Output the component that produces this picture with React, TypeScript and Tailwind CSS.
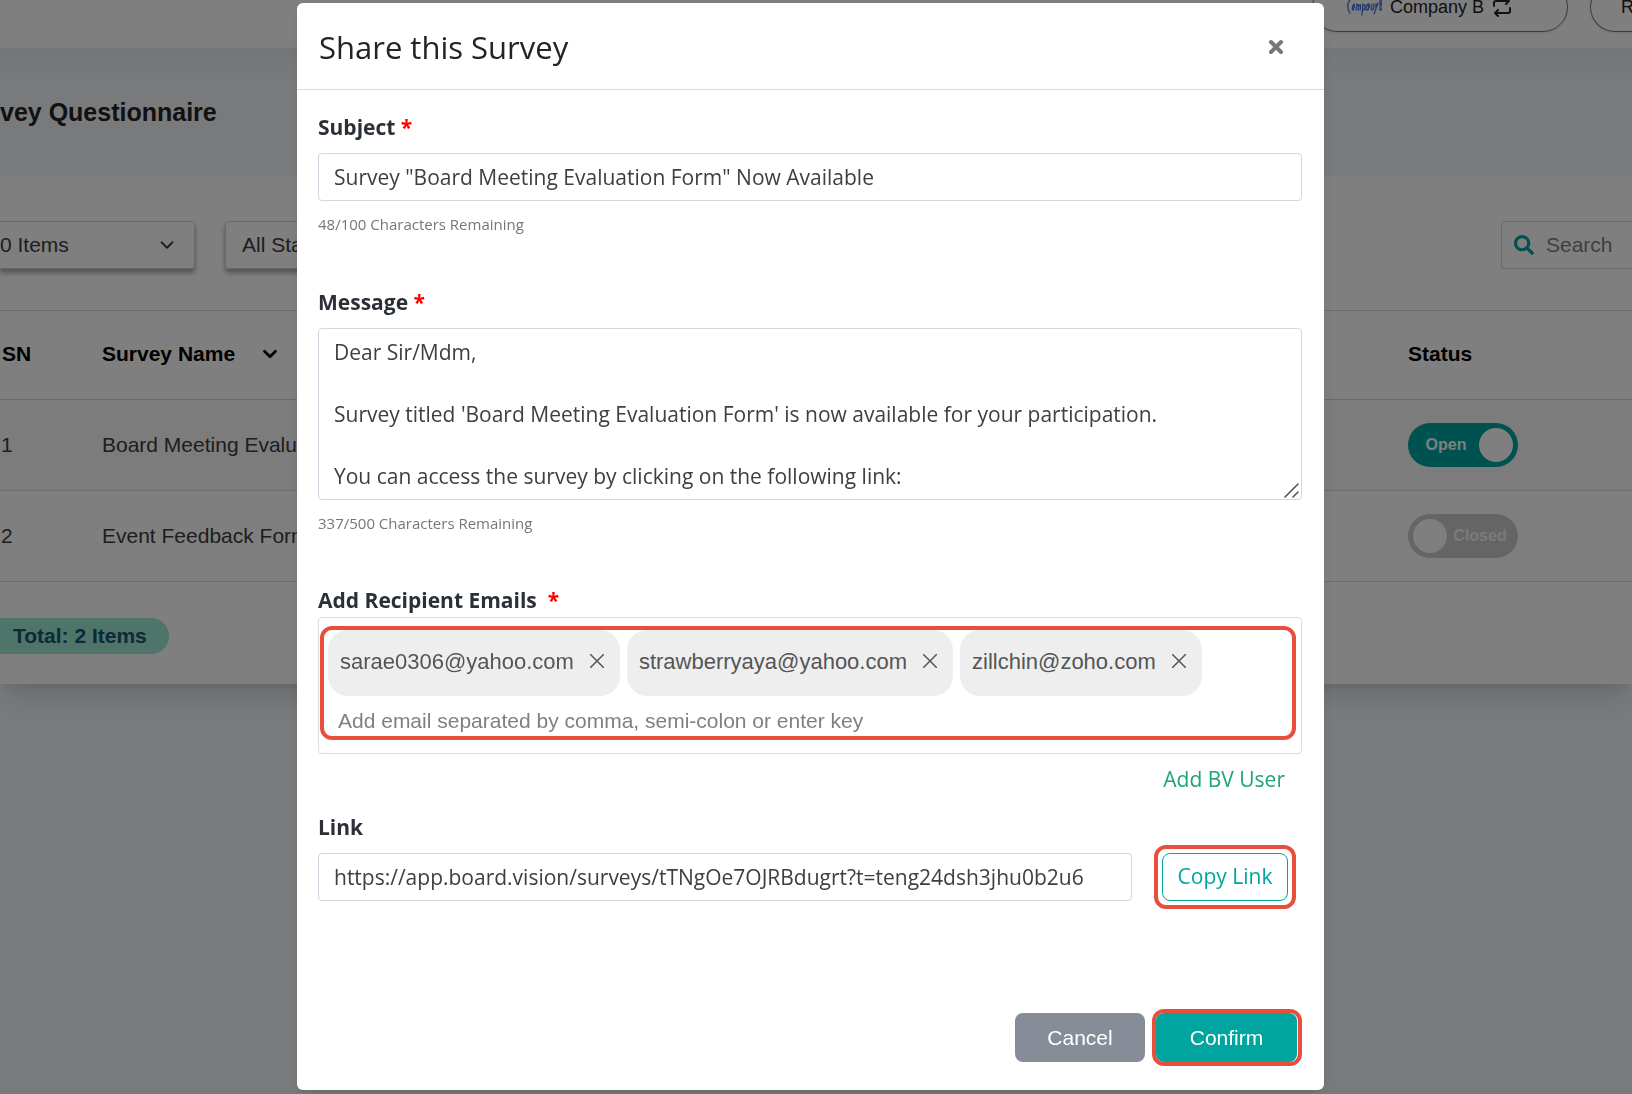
import { useState } from 'react'
import { ChevronDown } from 'lucide-react'
import { FaSearch } from 'react-icons/fa'

const recipients = ['sarae0306@yahoo.com', 'strawberryaya@yahoo.com', 'zillchin@zoho.com']

const surveys = [
  { sn: 1, name: 'Board Meeting Evaluation Form', open: true },
  { sn: 2, name: 'Event Feedback Form', open: false },
]

const defaultMessage = `Dear Sir/Mdm,

Survey titled 'Board Meeting Evaluation Form' is now available for your participation.

You can access the survey by clicking on the following link:`

const CompanyLogo = () => (
  <svg className="h-[18px] w-9" viewBox="0 0 36 18" fill="none" stroke="#4a74d8" strokeWidth="1.3" strokeLinecap="round">
    <path d="M4 2C1 5 1 12 4 15" />
    <path d="M8 6c-2 2-2 7-1 6s2-5 1-6M10 12l1-6M11 8c2-3 2 0 1 4M13 8c2-3 2 0 1 4M17 6l-1 11M17 7c3-2 3 5 0 5" />
    <path d="M23 6c-3 0-4 6-2 6s3-6 2-6l-1 6M26 6c-1 3-1 6 0 6s2-3 2-6M30 6v5M32 5l-4 11M34 2v10M34 2c3 0 2 4 0 4c3 0 3 6 0 6" />
  </svg>
)

const SwapIcon = () => (
  <svg
    className="size-5"
    viewBox="0 0 20 20"
    fill="none"
    stroke="currentColor"
    strokeWidth="2"
    strokeLinecap="round"
    strokeLinejoin="round"
  >
    <path d="M2 9V6a2 2 0 0 1 2-2h13M14 1l3 3-3 3" />
    <path d="M18 11v3a2 2 0 0 1-2 2H3M6 13l-3 3 3 3" />
  </svg>
)

const StatusToggle = ({ name, defaultOpen }: { name: string; defaultOpen: boolean }) => {
  const [open, setOpen] = useState(defaultOpen)
  return (
    <label
      className={`flex h-11 w-[110px] items-center rounded-full px-[5px] text-base font-bold ${
        open ? 'flex-row-reverse bg-[#00a5a0] text-white' : 'bg-[#cbcbcb] text-[#f4f4f4]'
      }`}
    >
      <input
        type="checkbox"
        className="sr-only"
        aria-label={`${name} status`}
        checked={open}
        onChange={(e) => setOpen(e.target.checked)}
      />
      <span className="size-[34px] shrink-0 rounded-full bg-white" />
      <span className="flex-1 text-center">{open ? 'Open' : 'Closed'}</span>
    </label>
  )
}

const SurveyPage = () => (
  <div className="min-h-screen overflow-hidden bg-[#f3f5f9] font-['Liberation_Sans',Arial,sans-serif] text-[21px] text-[#3c3c3c]">
    {/* Top bar */}
    <header className="flex h-12 items-end gap-[22px] bg-white pb-4 text-lg text-[#222]">
      <div className="flex-1" />
      <button className="flex h-[50px] w-[256px] shrink-0 items-center gap-2 rounded-full border border-[#777] pl-[33px] shadow">
        <CompanyLogo />
        Company B
        <SwapIcon />
      </button>
      <button className="h-[50px] w-[42px] shrink-0 rounded-l-full border border-r-0 border-[#777] pl-[30px] text-left shadow">
        R
      </button>
    </header>

    {/* Page heading */}
    <div className="flex h-32 items-center bg-linear-to-b from-[#eaecef] to-[#f3f5f9] to-30% pt-[2px]">
      <h1 className="text-[25px] font-bold text-[#222]">vey Questionnaire</h1>
    </div>

    <main className="bg-white shadow-xl">
      <div className="flex h-[134px] items-center pt-1">
        <button className="flex h-12 w-[195px] items-center justify-between rounded-r border border-l-0 border-[#ced0da] pr-4 shadow-[0_4px_5px_rgba(0,0,0,0.35)]">
          0 Items
          <ChevronDown className="size-[22px]" />
        </button>
        <button className="ml-[30px] flex h-12 w-[195px] items-center justify-between rounded border border-[#ced0da] px-4 shadow-[0_4px_5px_rgba(0,0,0,0.35)]">
          All Status
          <ChevronDown className="size-[22px]" />
        </button>
        <div className="ml-auto flex h-12 w-[131px] items-center gap-3 rounded-l border border-r-0 border-[#ced0da] pl-3">
          <FaSearch className="size-5 shrink-0 text-[#00a5a0]" />
          <input className="w-full outline-none placeholder:text-[#808080]" placeholder="Search" aria-label="Search" />
        </div>
      </div>

      <table className="w-full table-fixed border-t border-[#d8dbe0] text-left">
        <thead>
          <tr className="h-[89px] border-b border-[#d0d2d6] text-black">
            <th className="w-[102px] pb-[2px] pl-[2px]">SN</th>
            <th className="pb-[2px]">
              <span className="flex items-center gap-6">
                Survey Name
                <ChevronDown className="size-[22px]" strokeWidth={3} />
              </span>
            </th>
            <th className="w-[224px] pb-[2px]">Status</th>
          </tr>
        </thead>
        <tbody>
          {surveys.map((survey) => (
            <tr key={survey.sn} className="h-[91px] border-b border-[#d8dbe0] odd:bg-[#f9f9f9]">
              <td className="pl-[1px]">{survey.sn}</td>
              <td>{survey.name}</td>
              <td>
                <StatusToggle name={survey.name} defaultOpen={survey.open} />
              </td>
            </tr>
          ))}
        </tbody>
      </table>

      <div className="flex h-[102px] items-start pt-9">
        <span className="flex h-9 items-center rounded-r-full bg-[#9ee8d4] pr-[22px] pl-[13px] font-bold text-[#1d5470]">
          Total: 2 Items
        </span>
      </div>
    </main>
  </div>
)

const Required = () => <span className="text-[#f00]">*</span>

const ShareDialog = () => (
  <div
    role="dialog"
    aria-labelledby="share-title"
    className="mt-[3px] mr-[308px] ml-[297px] flex flex-1 flex-col rounded-md bg-white text-[#3c4043] shadow-lg"
  >
    <header className="flex h-[87px] items-center justify-between border-b border-[#d8dbe0] pt-[2px] pr-10 pl-[22px]">
      <h2 id="share-title" className="text-[31px] text-[#212529]">
        Share this Survey
      </h2>
      <button aria-label="Close" className="text-[#777]">
        <svg className="size-4" viewBox="0 0 16 16" stroke="currentColor" strokeWidth="4" strokeLinecap="round">
          <path d="M3 3l10 10M13 3L3 13" />
        </svg>
      </button>
    </header>

    <form className="flex flex-1 flex-col pt-[19px] pr-[22px] pl-[21px]" onSubmit={(e) => e.preventDefault()}>
      <label htmlFor="subject" className="mb-2 h-9 leading-9 font-bold text-[#2b2f36]">
        Subject <Required />
      </label>
      <input
        id="subject"
        className="h-12 rounded border border-[#d3d6e0] px-[15px]"
        defaultValue={'Survey "Board Meeting Evaluation Form" Now Available'}
      />
      <small className="mt-[11px] h-6 text-[15px] leading-6 text-[#777]">48/100 Characters Remaining</small>

      <label htmlFor="message" className="mt-12 mb-2 h-9 leading-9 font-bold text-[#2b2f36]">
        Message <Required />
      </label>
      <div className="relative flex">
        <textarea
          id="message"
          className="h-[172px] w-full resize-none overflow-hidden rounded border border-[#d3d6e0] px-[15px] pt-2 leading-[31px]"
          defaultValue={defaultMessage}
        />
        {/* Resize grip */}
        <svg
          className="absolute right-[3px] bottom-[2px] size-[15px]"
          viewBox="0 0 15 15"
          stroke="#555"
          strokeWidth="1.6"
          strokeLinecap="round"
        >
          <path d="M1 14L14 1M9 14l5-5" />
        </svg>
      </div>
      <small className="mt-[11px] h-6 text-[15px] leading-6 text-[#777]">337/500 Characters Remaining</small>

      <label htmlFor="recipients" className="mt-12 h-[34px] leading-[34px] font-bold text-[#2b2f36]">
        Add Recipient Emails&nbsp; <Required />
      </label>
      <div className="rounded border border-[#dcdcdc] pt-2 pr-[5px] pb-[13px] pl-[1px] font-['Liberation_Sans',Arial,sans-serif]">
        <div className="h-[114px] rounded-xl border-4 border-[#e74f3c] pl-1">
          <ul className="flex gap-[7px] text-[22px] text-[#555]">
            {recipients.map((email) => (
              <li key={email} className="flex h-[66px] items-center gap-4 rounded-[20px] bg-[#eee] pr-4 pb-1 pl-3">
                {email}
                <button type="button" aria-label={`Remove ${email}`}>
                  <svg className="size-[14px]" viewBox="0 0 14 14" stroke="currentColor" strokeWidth="1.5">
                    <path d="M0 0l14 14M14 0L0 14" />
                  </svg>
                </button>
              </li>
            ))}
          </ul>
          <input
            id="recipients"
            className="mt-[10px] h-[30px] w-full px-[10px] outline-none placeholder:text-[#808080]"
            placeholder="Add email separated by comma, semi-colon or enter key"
          />
        </div>
      </div>

      <a href="#users" className="mt-[7px] mr-[17px] self-end leading-9 text-[#1fa37c]">
        Add BV User
      </a>

      <label htmlFor="link" className="mt-3 mb-2 h-9 leading-9 font-bold text-[#2b2f36]">
        Link
      </label>
      <div className="flex items-center">
        <input
          id="link"
          readOnly
          className="h-12 flex-1 rounded border border-[#d3d6e0] px-[15px]"
          defaultValue="https://app.board.vision/surveys/tTNgOe7OJRBdugrt?t=teng24dsh3jhu0b2u6"
        />
        <div className="-my-2 mr-[6px] ml-[22px] rounded-xl border-4 border-[#e74f3c] px-1 py-1">
          <button type="button" className="h-12 w-[126px] rounded-lg border border-[#00a5a0] text-[#00a5a0]">
            Copy Link
          </button>
        </div>
      </div>

      <div className="mt-auto mb-6 flex items-center justify-end gap-[7px] font-['Liberation_Sans',Arial,sans-serif] text-white">
        <button type="button" className="h-[49px] w-[130px] rounded-lg bg-[#868c98]">
          Cancel
        </button>
        <div className="rounded-xl border-4 border-[#e74f3c] pr-[1px]">
          <button type="submit" className="block h-[49px] w-[141px] rounded-lg bg-[#00a5a0]">
            Confirm
          </button>
        </div>
      </div>
    </form>
  </div>
)

export default function App() {
  return (
    <div className="relative">
      <SurveyPage />
      {/* Modal backdrop */}
      <div className="fixed inset-0 flex flex-col bg-black/50 pb-1 font-['Open_Sans',sans-serif] text-[21px]">
        <ShareDialog />
      </div>
    </div>
  )
}
